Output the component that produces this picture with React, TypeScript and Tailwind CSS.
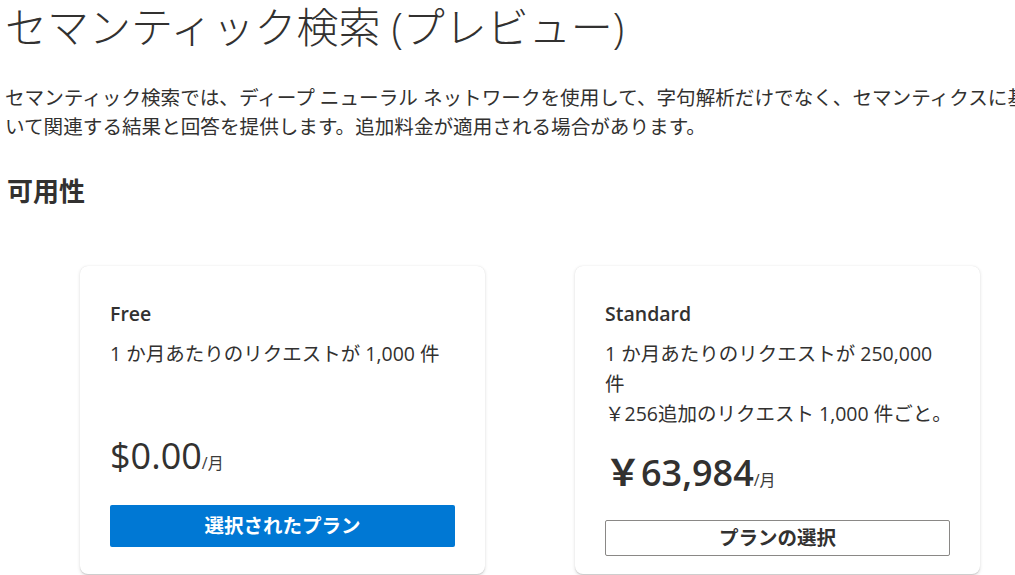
import React from "react";

export default function App() {
  return (
    <div className="w-[1015px] h-[575px] overflow-hidden bg-white text-[#323130] font-['Open_Sans','Noto_Sans_CJK_JP',sans-serif]">
      <div className="pl-[5px] pt-[2px]">
        <h1 className="text-[42px] leading-[50px] font-light whitespace-nowrap">
          セマンティック検索 (プレビュー)
        </h1>
        <p className="mt-[31px] text-[19.6px] leading-[29px] whitespace-nowrap">
          <span className="block">
            セマンティック検索では、ディープ ニューラル ネットワークを使用して、字句解析だけでなく、セマンティクスに基づ
          </span>
          <span className="block">
            いて関連する結果と回答を提供します。追加料金が適用される場合があります。
          </span>
        </p>
        <h2 className="mt-[33px] pl-[2px] text-[26px] leading-[34px] font-bold">可用性</h2>

        <div className="mt-[58px] ml-[75px] flex gap-[90px]">
          <div className="w-[405px] rounded-lg bg-white px-[30px] pt-[34px] pb-[18px] shadow-[0_1.6px_3.6px_rgba(0,0,0,0.13),0_0.3px_0.9px_rgba(0,0,0,0.11)] flex flex-col">
            <div className="text-[19.5px] leading-[28px] font-semibold">Free</div>
            <div className="mt-[11px] text-[19.5px] leading-[30px]">
              1 か月あたりのリクエストが 1,000 件
            </div>
            <div className="mt-[65px] leading-[44px] whitespace-nowrap">
              <span className="text-[36px]">$0.00</span>
              <span className="text-[16px] text-[#3b3a39]">/月</span>
            </div>
            <button className="mt-[20px] h-[42px] w-full rounded-[2px] bg-[#0078d4] text-white text-[19.5px] font-bold">
              選択されたプラン
            </button>
          </div>

          <div className="w-[405px] rounded-lg bg-white px-[30px] pt-[34px] pb-[18px] shadow-[0_1.6px_3.6px_rgba(0,0,0,0.13),0_0.3px_0.9px_rgba(0,0,0,0.11)] flex flex-col">
            <div className="text-[19.5px] leading-[28px] font-semibold">Standard</div>
            <div className="mt-[11px] text-[19.5px] leading-[30px] whitespace-nowrap">
              1 か月あたりのリクエストが 250,000
              <br />件
              <br />￥256追加のリクエスト 1,000 件ごと。
            </div>
            <div className="mt-[22px] leading-[44px] whitespace-nowrap">
              <span className="text-[36px] font-semibold">￥63,984</span>
              <span className="text-[16px] text-[#3b3a39]">/月</span>
            </div>
            <button className="mt-[18px] h-[36px] w-full rounded-[2px] border border-[#8a8886] bg-white text-[#323130] text-[19.5px] font-bold">
              プランの選択
            </button>
          </div>
        </div>
      </div>
    </div>
  );
}
